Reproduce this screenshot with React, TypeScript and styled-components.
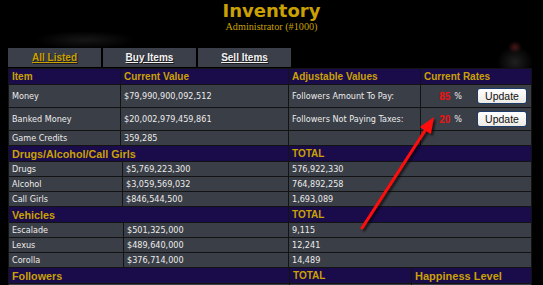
import React from "react";
import styled, { createGlobalStyle } from "styled-components";

const GlobalStyle = createGlobalStyle`
  html, body { margin: 0; padding: 0; background: #000; }
  body { font-family: "Liberation Sans", Arial, sans-serif; }
`;

const Page = styled.div`
  position: relative;
  width: 543px;
  height: 285px;
  overflow: hidden;
  background:
    radial-gradient(ellipse 7px 6px at 515px 47px, rgba(130, 40, 40, 0.55), transparent),
    radial-gradient(ellipse 18px 16px at 515px 62px, rgba(70, 70, 70, 0.45), transparent),
    radial-gradient(ellipse 50px 9px at 85px 40px, rgba(45, 45, 45, 0.5), transparent),
    #000;
`;

const Masthead = styled.header`
  text-align: center;
`;

const Title = styled.h1`
  margin: 0;
  font-family: "DejaVu Sans", Verdana, sans-serif;
  font-weight: bold;
  font-size: 18px;
  line-height: 21px;
  color: #c9a104;
`;

const Subtitle = styled.div`
  font-family: "Liberation Serif", "Times New Roman", serif;
  font-size: 10.2px;
  line-height: 12px;
  color: #c9a104;
`;

const Tabs = styled.nav`
  display: flex;
  gap: 2px;
  margin: 15px 0 1px 8px;
`;

const Tab = styled.a<{ $active?: boolean }>`
  width: 93px;
  height: 19px;
  display: flex;
  align-items: center;
  justify-content: center;
  background: #3b3f49;
  font-weight: bold;
  font-size: 10px;
  text-decoration: underline;
  color: ${(p) => (p.$active ? "#c9a104" : "#f2f2f2")};
  text-shadow: 1px 1px 0 #1a1a1a;
  cursor: pointer;
`;

const Table = styled.div`
  margin-left: 8px;
  width: 522px;
  padding: 1px;
  background: #131313;
  display: flex;
  flex-direction: column;
  gap: 1px;
`;

const Section = styled.div<{ $cols: string }>`
  display: grid;
  grid-template-columns: ${(p) => p.$cols};
  gap: 1px;
`;

const Cell = styled.div<{ $h?: number; $span?: number }>`
  height: ${(p) => p.$h ?? 14}px;
  grid-column: span ${(p) => p.$span ?? 1};
  box-sizing: border-box;
  padding: 0 3px;
  display: flex;
  align-items: center;
  background: #3a3e46;
  color: #ececec;
  font-family: "DejaVu Sans Condensed", "Liberation Sans", Arial, sans-serif;
  font-size: 9px;
  white-space: nowrap;
`;

const HeadCell = styled(Cell)<{ $size?: number }>`
  background: #1a0b4b;
  color: #c9a104;
  font-family: "Liberation Sans", Arial, sans-serif;
  font-weight: bold;
  font-size: ${(p) => p.$size ?? 10}px;
`;

const RateCell = styled(Cell)`
  justify-content: flex-end;
  padding-right: 4px;
`;

const Rate = styled.span`
  color: #f01212;
  font-family: "Liberation Sans", Arial, sans-serif;
  font-weight: bold;
  font-size: 10px;
`;

const Percent = styled.span`
  margin-left: 4px;
  font-size: 9px;
  color: #ececec;
`;

const UpdateButton = styled.button`
  margin-left: 15px;
  width: 50px;
  height: 16px;
  padding: 0;
  box-sizing: border-box;
  border: 1px solid #1d3b6a;
  border-radius: 3px;
  background: linear-gradient(#ffffff, #eceae4);
  color: #111;
  font-family: "Liberation Sans", Arial, sans-serif;
  font-size: 10.5px;
  line-height: 14px;
`;

const Overlay = styled.svg`
  position: absolute;
  left: 0;
  top: 0;
  pointer-events: none;
`;

const top4 = "111px 167px 131px 110px";

const drugs = [
  ["Drugs", "$5,769,223,300", "576,922,330"],
  ["Alcohol", "$3,059,569,032", "764,892,258"],
  ["Call Girls", "$846,544,500", "1,693,089"],
];

const vehicles = [
  ["Escalade", "$501,325,000", "9,115"],
  ["Lexus", "$489,640,000", "12,241"],
  ["Corolla", "$376,714,000", "14,489"],
];

function ItemSection({
  title,
  rows,
  cols,
}: {
  title: string;
  rows: string[][];
  cols: string;
}) {
  return (
    <Section $cols={cols}>
      <HeadCell $h={15} $size={10.75} $span={2}>{title}</HeadCell>
      <HeadCell $h={15}>TOTAL</HeadCell>
      {rows.map(([name, value, total]) => (
        <React.Fragment key={name}>
          <Cell>{name}</Cell>
          <Cell>{value}</Cell>
          <Cell>{total}</Cell>
        </React.Fragment>
      ))}
    </Section>
  );
}

export default function App() {
  return (
    <Page>
      <GlobalStyle />
      <Masthead>
        <Title>Inventory</Title>
        <Subtitle>Administrator (#1000)</Subtitle>
      </Masthead>
      <Tabs>
        <Tab $active>All Listed</Tab>
        <Tab>Buy Items</Tab>
        <Tab>Sell Items</Tab>
      </Tabs>
      <Table>
        <Section $cols={top4}>
          <HeadCell $h={15}>Item</HeadCell>
          <HeadCell $h={15}>Current Value</HeadCell>
          <HeadCell $h={15}>Adjustable Values</HeadCell>
          <HeadCell $h={15}>Current Rates</HeadCell>

          <Cell $h={22}>Money</Cell>
          <Cell $h={22}>$79,990,900,092,512</Cell>
          <Cell $h={22}>Followers Amount To Pay:</Cell>
          <RateCell $h={22}>
            <Rate>85</Rate>
            <Percent>%</Percent>
            <UpdateButton>Update</UpdateButton>
          </RateCell>

          <Cell $h={22}>Banked Money</Cell>
          <Cell $h={22}>$20,002,979,459,861</Cell>
          <Cell $h={22}>Followers Not Paying Taxes:</Cell>
          <RateCell $h={22}>
            <Rate>20</Rate>
            <Percent>%</Percent>
            <UpdateButton>Update</UpdateButton>
          </RateCell>

          <Cell>Game Credits</Cell>
          <Cell>359,285</Cell>
          <Cell />
          <Cell />
        </Section>
        <ItemSection title="Drugs/Alcohol/Call Girls" rows={drugs} cols="113px 165px 242px" />
        <ItemSection title="Vehicles" rows={vehicles} cols="114px 164px 242px" />
        <Section $cols="280px 121px 119px">
          <HeadCell $h={15} $size={10.75}>Followers</HeadCell>
          <HeadCell $h={15}>TOTAL</HeadCell>
          <HeadCell $h={15} $size={11}>Happiness Level</HeadCell>
          <Cell />
          <Cell />
          <Cell />
        </Section>
      </Table>
      <Overlay width={543} height={285} viewBox="0 0 543 285">
        <defs>
          <filter id="arrowShadow" x="-20%" y="-20%" width="140%" height="140%">
            <feDropShadow dx="2" dy="2" stdDeviation="1.2" floodColor="#000" floodOpacity="0.65" />
          </filter>
        </defs>
        <g filter="url(#arrowShadow)">
          <line x1={362} y1={228} x2={426} y2={129} stroke="#ff0a0a" strokeWidth={3} strokeLinecap="round" />
          <polygon points="434,117 430.8,133.9 419.8,126.9" fill="#ff0a0a" />
        </g>
      </Overlay>
    </Page>
  );
}
